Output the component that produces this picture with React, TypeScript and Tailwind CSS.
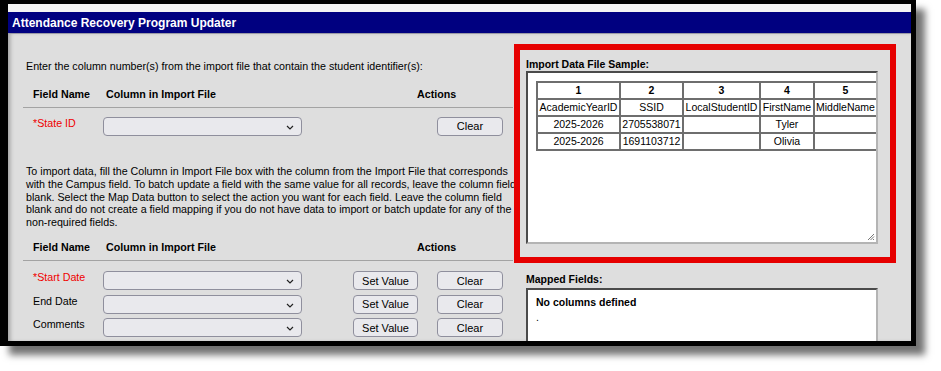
import React from "react";

const font = { fontFamily: '"Liberation Sans", Arial, sans-serif' };

const Chevron = () => (
  <svg width="8" height="5" viewBox="0 0 8 5" className="absolute right-[7px] top-[7px]">
    <path d="M1 1 L4 4 L7 1" fill="none" stroke="#222" strokeWidth="1.2" />
  </svg>
);

const Select = () => (
  <div className="relative h-[19px] w-[199px] shrink-0 rounded-[4px] border border-[#8f8f9d] bg-[#e9e9ed]">
    <Chevron />
  </div>
);

const Btn = ({ label, w }: { label: string; w: string }) => (
  <div
    className={`flex h-[19px] ${w} items-center justify-center rounded-[4px] border border-[#8f8f9d] bg-[#e9e9ed] text-[11px] text-black`}
  >
    {label}
  </div>
);

const FieldRow = ({ label, required, setValue }: { label: string; required?: boolean; setValue?: boolean }) => (
  <div className="flex h-[19px] shrink-0 pl-[10px]">
    <div className={`w-[70px] shrink-0 text-[10.7px] leading-[12px] ${required ? "text-[#f00000]" : "text-black"}`}>
      {required ? "*" : ""}
      {label}
    </div>
    <Select />
    <div className="ml-[51px] w-[65px] shrink-0">{setValue && <Btn label="Set Value" w="w-[65px]" />}</div>
    <div className="ml-[19px] shrink-0">
      <Btn label="Clear" w="w-[66px]" />
    </div>
  </div>
);

const Header = ({ className }: { className: string }) => (
  <div className={`flex shrink-0 border-b border-[#a3a3a3] pb-[6px] pl-[10px] text-[10.7px] font-bold leading-[13px] ${className}`}>
    <div className="w-[73px]">Field Name</div>
    <div className="w-[311px]">Column in Import File</div>
    <div>Actions</div>
  </div>
);

const sample = [
  ["AcademicYearID", "SSID", "LocalStudentID", "FirstName", "MiddleName"],
  ["2025-2026", "2705538071", "", "Tyler", ""],
  ["2025-2026", "1691103712", "", "Olivia", ""],
];

const colW = ["w-[83px]", "w-[63px]", "w-[77px]", "w-[54px]", "w-[63px]"];

export default function App() {
  return (
    <div className="min-h-screen bg-white text-black" style={font}>
      <div className="flex h-[346px] w-[916px] flex-col overflow-hidden border-t-4 border-r-[5px] border-b-[5px] border-l-8 border-black shadow-[9px_9px_7px_rgba(0,0,0,0.55)]">
        <div className="h-[8px] shrink-0 bg-[#f3f3f3]" />
        <div className="flex h-[21px] shrink-0 items-center bg-[#000080] pl-[4px] text-[12px] font-bold text-white">
          Attendance Recovery Program Updater
        </div>
        <div className="h-px shrink-0 bg-[#9a9aa6]" />
        <div className="relative flex min-h-0 flex-1 overflow-hidden bg-[#dedede] shadow-[inset_4px_0_4px_-2px_rgba(0,0,0,0.3)]">
          {/* left column */}
          <div className="ml-[15px] flex w-[490px] shrink-0 flex-col">
            <div className="shrink-0 pt-[26px] pl-[3px] text-[10.7px] leading-[13px]">
              Enter the column number(s) from the import file that contain the student identifier(s):
            </div>
            <Header className="mt-[15px]" />
            <div className="mt-[9px] shrink-0">
              <FieldRow label="State ID" required />
            </div>
            <div className="mt-[29px] shrink-0 whitespace-nowrap pl-[3px] text-[10.7px] leading-[12.75px]">
              To import data, fill the Column in Import File box with the column from the Import File that corresponds
              <br />
              with the Campus field. To batch update a field with the same value for all records, leave the column field
              <br />
              blank. Select the Map Data button to select the action you want for each field. Leave the column field
              <br />
              blank and do not create a field mapping if you do not have data to import or batch update for any of the
              <br />
              non-required fields.
            </div>
            <Header className="mt-[12.5px]" />
            <div className="mt-[10px] flex shrink-0 flex-col gap-[4.5px]">
              <FieldRow label="Start Date" required setValue />
              <FieldRow label="End Date" setValue />
              <FieldRow label="Comments" setValue />
            </div>
          </div>

          {/* right column */}
          <div className="ml-[13px] flex w-[353px] shrink-0 flex-col">
            <div className="shrink-0 pt-[23.5px] text-[10.5px] font-bold leading-[13px]">Import Data File Sample:</div>
            <div className="relative h-[173px] w-[352px] shrink-0 overflow-hidden border-2 border-t-[#4b4b4b] border-r-[#b4b4b4] border-b-[#b4b4b4] border-l-[#4b4b4b] bg-white pt-[8px] pl-[8px]">
              <table className="w-[340px] table-fixed border-collapse text-[10.5px]">
                <thead>
                  <tr>
                    {[1, 2, 3, 4, 5].map((n, i) => (
                      <th key={n} className={`${colW[i]} h-[17px] border-2 border-[#6e6e6e] p-0 text-center font-bold leading-[13px]`}>
                        {n}
                      </th>
                    ))}
                  </tr>
                </thead>
                <tbody>
                  {sample.map((row, r) => (
                    <tr key={r}>
                      {row.map((c, i) => (
                        <td key={i} className="h-[17px] overflow-hidden whitespace-nowrap border-2 border-[#6e6e6e] p-0 text-center leading-[13px]">
                          {c}
                        </td>
                      ))}
                    </tr>
                  ))}
                </tbody>
              </table>
              <svg width="8" height="8" viewBox="0 0 8 8" className="absolute right-[1px] bottom-[1px]">
                <path d="M7 1 L1 7 M7 3.5 L3.5 7 M7 6 L6 7" stroke="#777" strokeWidth="1" />
              </svg>
            </div>
            <div className="mt-[29.5px] shrink-0 text-[10.5px] font-bold leading-[13px]">Mapped Fields:</div>
            <div className="mt-[1.5px] h-[80px] w-[352px] shrink-0 border-2 border-t-[#4b4b4b] border-r-[#b4b4b4] border-b-[#b4b4b4] border-l-[#4b4b4b] bg-white pt-[6.5px] pl-[8px]">
              <div className="text-[10.5px] font-bold leading-[13px]">No columns defined</div>
              <div className="mt-[2px] text-[10.5px] leading-[13px]">.</div>
            </div>
          </div>

          {/* annotation */}
          <div className="absolute top-[10px] left-[506px] h-[219px] w-[382px] border-[6px] border-[#e60000]" />
        </div>
      </div>
    </div>
  );
}
